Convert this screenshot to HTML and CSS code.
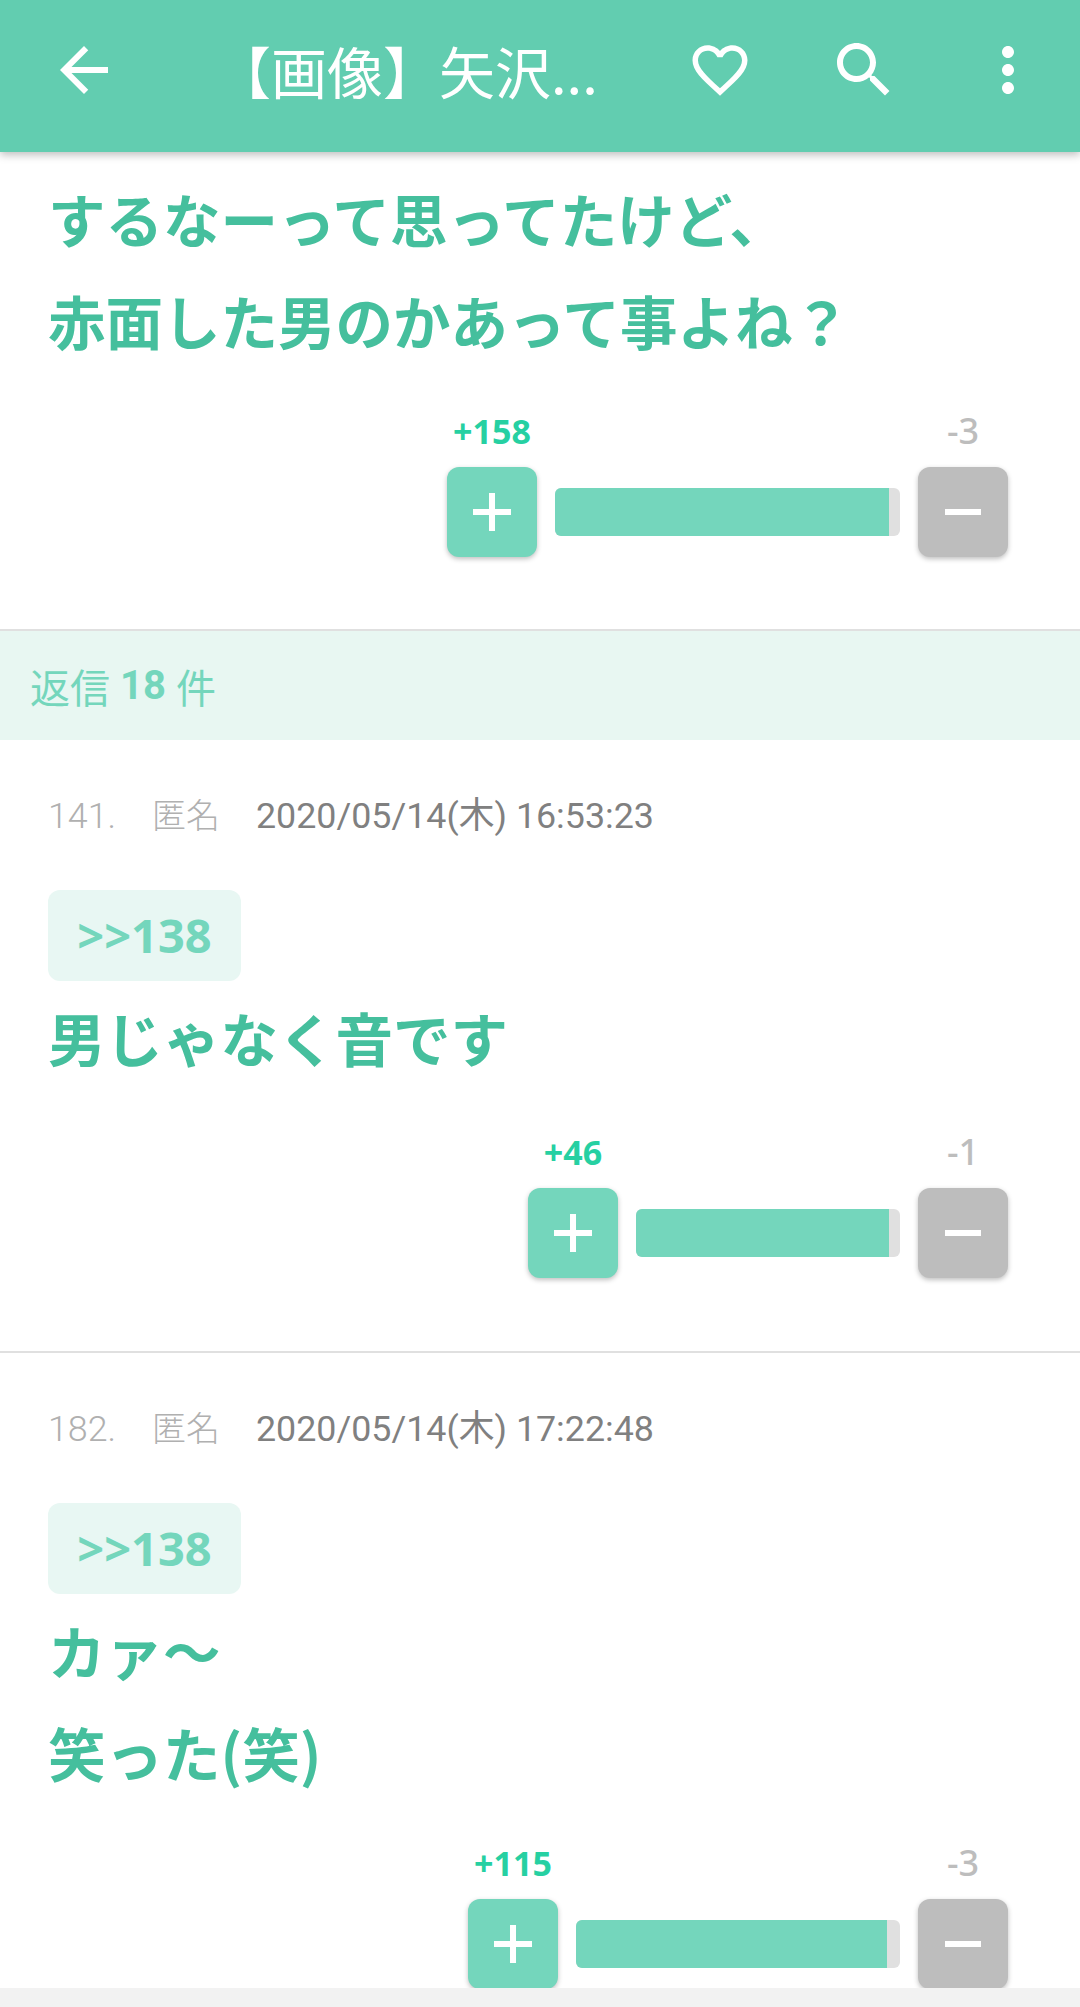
FILE: index.html
```html
<!DOCTYPE html>
<html lang="ja">
<head>
    <meta charset="utf-8">
    <title>【画像】矢沢...</title>
    <link rel="stylesheet" href="styles.css">
</head>
<body>
    <div class="header">
        <svg class="icon" viewBox="0 0 24 24"><path d="M20 11H7.83l5.59-5.59L12 4l-8 8 8 8 1.41-1.41L7.83 13H20v-2z"/></svg>
        <div class="title">【画像】矢沢...</div>
        <div class="header-icons">
            <svg class="icon" viewBox="-1.09 -1.09 26.18 26.18"><path d="M16.5 3c-1.74 0-3.41.81-4.5 2.09C10.91 3.81 9.24 3 7.5 3 4.42 3 2 5.42 2 8.5c0 3.78 3.4 6.86 8.55 11.54L12 21.35l1.45-1.32C18.6 15.36 22 12.28 22 8.5 22 5.42 19.58 3 16.5 3zm-4.4 15.55l-.1.1-.1-.1C7.14 14.24 4 11.39 4 8.5 4 6.5 5.5 5 7.5 5c1.54 0 3.04.99 3.57 2.36h1.87C13.46 5.99 14.96 5 16.5 5c2 0 3.5 1.5 3.5 3.5 0 2.89-3.14 5.74-7.9 10.05z"/></svg>
            <svg class="icon" viewBox="0 0 24 24"><path d="M15.5 14h-.79l-.28-.27C15.41 12.59 16 11.11 16 9.5 16 5.91 13.09 3 9.5 3S3 5.91 3 9.5 5.91 16 9.5 16c1.61 0 3.09-.59 4.23-1.57l.27.28v.79l5 4.99L20.49 19l-4.99-5zm-6 0C7.01 14 5 11.99 5 9.5S7.01 5 9.5 5 14 7.01 14 9.5 11.99 14 9.5 14z"/></svg>
            <svg class="icon" viewBox="0 0 24 24"><path d="M12 8c1.1 0 2-.9 2-2s-.9-2-2-2-2 .9-2 2 .9 2 2 2zm0 2c-1.1 0-2 .9-2 2s.9 2 2 2 2-.9 2-2-.9-2-2-2zm0 6c-1.1 0-2 .9-2 2s.9 2 2 2 2-.9 2-2-.9-2-2-2z"/></svg>
        </div>
    </div>

    <div class="main">
        <div class="post post-first">
            <div class="text">するなーって思ってたけど、<br>赤面した男のかあって事よね？</div>
            <div class="vote">
                <div class="vote-col">
                    <div class="count plus-count">+158</div>
                    <div class="btn btn-plus"><svg viewBox="0 0 38 38"><path d="M16 0h6v16h16v6H22v16h-6V22H0v-6h16z"/></svg></div>
                </div>
                <div class="bar" style="width: 345px"><div class="bar-fill" style="width: 334px"></div></div>
                <div class="vote-col">
                    <div class="count minus-count">-3</div>
                    <div class="btn btn-minus"><svg viewBox="0 0 38 38"><path d="M1 16h36v6H1z"/></svg></div>
                </div>
            </div>
        </div>

        <div class="replies">返信 <b>18</b> 件</div>

        <div class="post post-reply">
            <div class="meta"><span class="num">141.</span><span class="name">匿名</span><span class="date">2020/05/14(木) 16:53:23</span></div>
            <div class="anchor">&gt;&gt;138</div>
            <div class="text">男じゃなく音です</div>
            <div class="vote">
                <div class="vote-col">
                    <div class="count plus-count">+46</div>
                    <div class="btn btn-plus"><svg viewBox="0 0 38 38"><path d="M16 0h6v16h16v6H22v16h-6V22H0v-6h16z"/></svg></div>
                </div>
                <div class="bar" style="width: 264px"><div class="bar-fill" style="width: 253px"></div></div>
                <div class="vote-col">
                    <div class="count minus-count">-1</div>
                    <div class="btn btn-minus"><svg viewBox="0 0 38 38"><path d="M1 16h36v6H1z"/></svg></div>
                </div>
            </div>
        </div>

        <div class="post post-reply">
            <div class="meta"><span class="num">182.</span><span class="name">匿名</span><span class="date">2020/05/14(木) 17:22:48</span></div>
            <div class="anchor">&gt;&gt;138</div>
            <div class="text">カァ～<br>笑った(笑)</div>
            <div class="vote">
                <div class="vote-col">
                    <div class="count plus-count">+115</div>
                    <div class="btn btn-plus"><svg viewBox="0 0 38 38"><path d="M16 0h6v16h16v6H22v16h-6V22H0v-6h16z"/></svg></div>
                </div>
                <div class="bar" style="width: 324px"><div class="bar-fill" style="width: 311px"></div></div>
                <div class="vote-col">
                    <div class="count minus-count">-3</div>
                    <div class="btn btn-minus"><svg viewBox="0 0 38 38"><path d="M1 16h36v6H1z"/></svg></div>
                </div>
            </div>
        </div>
    </div>

    <div class="footer"></div>
</body>
</html>
```

FILE: styles.css
```css
body {
    margin: 0;
    height: 2007px;
    overflow: hidden;
    background: #fff;
    font-family: Roboto, "Noto Sans CJK JP", sans-serif;
}

.header {
    position: relative;
    z-index: 1;
    display: flex;
    align-items: center;
    box-sizing: border-box;
    height: 152px;
    padding: 0 36px 12px 48px;
    background: #62cdb0;
    box-shadow: 0 3px 8px rgba(0, 0, 0, 0.25);
}
.icon {
    display: block;
    width: 72px;
    height: 72px;
    fill: #fff;
}
.title {
    flex: 1;
    margin-bottom: 2px;
    padding-left: 95px;
    color: #fff;
    font-family: "Noto Sans CJK JP", sans-serif;
    font-size: 56px;
    white-space: nowrap;
}
.header-icons {
    display: flex;
    gap: 72px;
}

.main {
    height: 1836px;
    overflow: hidden;
}

.post {
    padding: 0 72px 73px 48px;
    border-bottom: 2px solid #e0e0e0;
}
.post-first {
    padding-top: 15px;
    padding-bottom: 72px;
}
.post-reply {
    padding-top: 51px;
}
.post:last-child {
    border-bottom: 0;
}

.text {
    min-height: 106px;
    color: #45bf9d;
    font-family: "Noto Sans CJK JP", sans-serif;
    font-size: 57.5px;
    font-weight: 700;
    line-height: 102px;
}

.vote {
    display: flex;
    justify-content: flex-end;
    align-items: flex-end;
    gap: 18px;
    margin-top: 38px;
}
.vote-col {
    width: 90px;
}
.count {
    height: 44px;
    margin-bottom: 14px;
    font-family: "Noto Sans", sans-serif;
    font-size: 34px;
    line-height: 44px;
    text-align: center;
    white-space: nowrap;
}
.plus-count {
    color: #26d0a2;
    font-weight: 700;
}
.minus-count {
    color: #bdbdbd;
    font-size: 36px;
    font-weight: 500;
}
.btn {
    display: flex;
    align-items: center;
    justify-content: center;
    height: 90px;
    border-radius: 12px;
    box-shadow: 0 2px 5px rgba(0, 0, 0, 0.25);
}
.btn svg {
    width: 38px;
    height: 38px;
    fill: #fff;
}
.btn-plus {
    background: #74d6bc;
}
.btn-minus {
    background: #bdbdbd;
}
.bar {
    height: 48px;
    margin-bottom: 21px;
    border-radius: 6px;
    background: #e0e0e0;
    overflow: hidden;
}
.bar-fill {
    height: 100%;
    background: #74d6bc;
}

.replies {
    display: flex;
    align-items: center;
    gap: 10px;
    height: 109px;
    padding-left: 30px;
    background: #e8f7f2;
    color: #74d6bc;
    font-size: 40px;
}

.meta {
    display: flex;
    height: 50px;
    font-size: 35.8px;
    line-height: 50px;
}
.num {
    width: 104px;
    color: #b0b0b0;
    font-weight: 300;
}
.name {
    width: 104px;
    color: #b0b0b0;
    font-size: 34px;
    font-weight: 300;
}
.date {
    color: #808080;
}
.anchor {
    width: 193px;
    height: 91px;
    margin-top: 49px;
    margin-bottom: 5px;
    border-radius: 12px;
    background: #e8f7f3;
    color: #74d6bc;
    font-family: "Noto Sans", sans-serif;
    font-size: 47px;
    font-weight: 700;
    line-height: 91px;
    text-align: center;
}

.footer {
    height: 19px;
    background: #f2f2f2;
}
```
